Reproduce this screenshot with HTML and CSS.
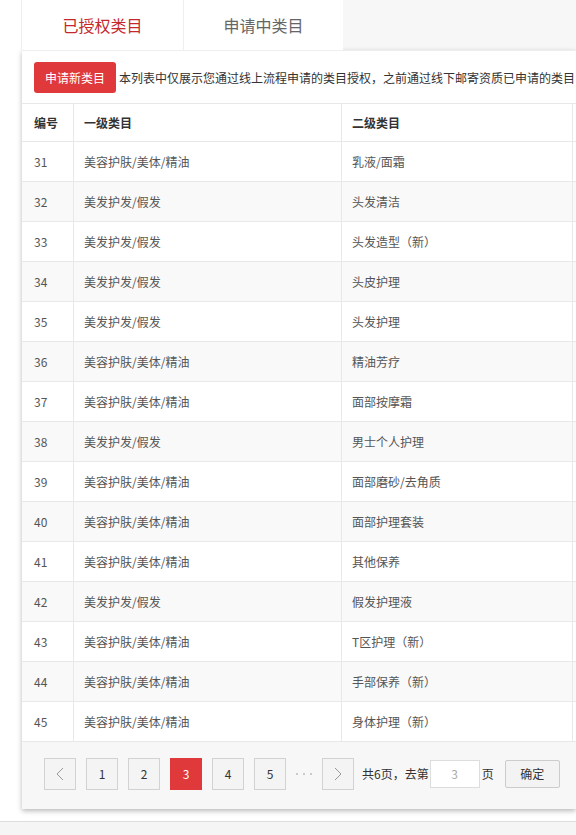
FILE: index.html
```html
<!DOCTYPE html>
<html lang="zh-CN">
<head>
<meta charset="utf-8">
<title>类目授权</title>
<link rel="stylesheet" href="styles.css">
</head>
<body>
<div class="wrap">
  <div class="tabs">
    <div class="tab active">已授权类目</div>
    <div class="tab">申请中类目</div>
  </div>
  <div class="card">
    <div class="toolbar">
      <span class="btn-red">申请新类目</span>
      <span class="desc">本列表中仅展示您通过线上流程申请的类目授权，之前通过线下邮寄资质已申请的类目</span>
    </div>
    <div class="grid">
      <div class="row head"><div class="c c1">编号</div><div class="c">一级类目</div><div class="c">二级类目</div><div class="c"></div></div>
      <div class="row"><div class="c c1">31</div><div class="c">美容护肤/美体/精油</div><div class="c">乳液/面霜</div><div class="c"></div></div>
      <div class="row"><div class="c c1">32</div><div class="c">美发护发/假发</div><div class="c">头发清洁</div><div class="c"></div></div>
      <div class="row"><div class="c c1">33</div><div class="c">美发护发/假发</div><div class="c">头发造型（新）</div><div class="c"></div></div>
      <div class="row"><div class="c c1">34</div><div class="c">美发护发/假发</div><div class="c">头皮护理</div><div class="c"></div></div>
      <div class="row"><div class="c c1">35</div><div class="c">美发护发/假发</div><div class="c">头发护理</div><div class="c"></div></div>
      <div class="row"><div class="c c1">36</div><div class="c">美容护肤/美体/精油</div><div class="c">精油芳疗</div><div class="c"></div></div>
      <div class="row"><div class="c c1">37</div><div class="c">美容护肤/美体/精油</div><div class="c">面部按摩霜</div><div class="c"></div></div>
      <div class="row"><div class="c c1">38</div><div class="c">美发护发/假发</div><div class="c">男士个人护理</div><div class="c"></div></div>
      <div class="row"><div class="c c1">39</div><div class="c">美容护肤/美体/精油</div><div class="c">面部磨砂/去角质</div><div class="c"></div></div>
      <div class="row"><div class="c c1">40</div><div class="c">美容护肤/美体/精油</div><div class="c">面部护理套装</div><div class="c"></div></div>
      <div class="row"><div class="c c1">41</div><div class="c">美容护肤/美体/精油</div><div class="c">其他保养</div><div class="c"></div></div>
      <div class="row"><div class="c c1">42</div><div class="c">美发护发/假发</div><div class="c">假发护理液</div><div class="c"></div></div>
      <div class="row"><div class="c c1">43</div><div class="c">美容护肤/美体/精油</div><div class="c">T区护理（新）</div><div class="c"></div></div>
      <div class="row"><div class="c c1">44</div><div class="c">美容护肤/美体/精油</div><div class="c">手部保养（新）</div><div class="c"></div></div>
      <div class="row"><div class="c c1">45</div><div class="c">美容护肤/美体/精油</div><div class="c">身体护理（新）</div><div class="c"></div></div>
    </div>
    <div class="pager">
      <span class="pg"><svg width="8" height="14" viewBox="0 0 8 14"><polyline points="7,1 1,7 7,13" fill="none" stroke="#999" stroke-width="1"/></svg></span>
      <span class="pg">1</span>
      <span class="pg">2</span>
      <span class="pg on">3</span>
      <span class="pg">4</span>
      <span class="pg">5</span>
      <span class="dots"><i></i><i></i><i></i></span>
      <span class="pg"><svg width="8" height="14" viewBox="0 0 8 14"><polyline points="1,1 7,7 1,13" fill="none" stroke="#999" stroke-width="1"/></svg></span>
      <span class="total">共6页，去第</span>
      <span class="inp">3</span>
      <span class="ye">页</span>
      <span class="ok">确定</span>
    </div>
  </div>
  <div class="foot"></div>
</div>
</body>
</html>
```

FILE: styles.css
```css
* { box-sizing: border-box; }
html, body { margin: 0; padding: 0; }
body {
  width: 576px;
  height: 835px;
  overflow: hidden;
  background: #fff;
  font-family: "Microsoft YaHei", "Noto Sans CJK SC", sans-serif;
  font-size: 12px;
  color: #333;
}
.wrap { width: 576px; overflow: hidden; }
.tabs {
  display: flex;
  height: 50px;
  margin-left: 21px;
  background: #f7f7f7;
}
.tab {
  width: 162px;
  background: #fff;
  border-left: 1px solid #eee;
  display: flex;
  align-items: center;
  justify-content: center;
  font-size: 16px;
  color: #666;
}
.tab + .tab { width: 160px; }
.tab.active { color: #c4282d; }
.card {
  margin-left: 22px;
  background: #fff;
  border-top: 1px solid #eee;
  box-shadow: 0 2px 5px rgba(0,0,0,0.28);
}
.toolbar {
  display: flex;
  align-items: center;
  gap: 3px;
  height: 52px;
  padding: 0 0 0 12px;
  white-space: nowrap;
  overflow: hidden;
}
.btn-red {
  flex: none;
  height: 31px;
  line-height: 31px;
  padding: 0 11px;
  background: #df393b;
  color: #fff;
  border-radius: 3px;
}
.desc { color: #333; }
.grid { border-top: 1px solid #e8e8e8; }
.row {
  display: grid;
  grid-template-columns: 52px 268px 231px 1fr;
  height: 40px;
  border-bottom: 1px solid #e8e8e8;
  color: #555;
}
.row:nth-child(odd):not(.head) { background: #f9f9f9; }
.row.head { height: 38px; color: #333; font-weight: bold; }
.c {
  display: flex;
  align-items: center;
  padding-left: 10px;
  border-right: 1px solid #e8e8e8;
  white-space: nowrap;
}
.c.c1 { padding-left: 12px; }
.pager {
  display: flex;
  align-items: center;
  height: 67px;
  padding: 0 0 4px 22px;
  background: #f7f7f7;
  white-space: nowrap;
  overflow: hidden;
}
.pg {
  flex: none;
  width: 32px;
  height: 32px;
  margin-right: 10px;
  border: 1px solid #d2d2d2;
  background: #f4f4f4;
  display: flex;
  align-items: center;
  justify-content: center;
  font-size: 12px;
  color: #333;
}
.pg.on { background: #df393b; border-color: #df393b; color: #fff; }
.dots {
  flex: none;
  width: 16px;
  margin-right: 10px;
  display: flex;
  justify-content: space-between;
  align-items: center;
}
.dots i {
  width: 2px;
  height: 2px;
  border-radius: 50%;
  background: #bbb;
}
.total { margin-left: -2px; color: #333; }
.inp {
  flex: none;
  width: 50px;
  height: 28px;
  margin-left: 1px;
  border: 1px solid #ddd;
  background: #fff;
  color: #aaa;
  display: flex;
  align-items: center;
  justify-content: center;
}
.ye { margin-left: 2px; }
.ok {
  flex: none;
  width: 55px;
  height: 28px;
  margin-left: 11px;
  border: 1px solid #ccc;
  border-radius: 2px;
  background: #f3f3f3;
  display: flex;
  align-items: center;
  justify-content: center;
  color: #333;
}
.foot {
  margin-top: 12px;
  height: 40px;
  border-top: 1px solid #ddd;
  background: #f5f5f5;
}
```
